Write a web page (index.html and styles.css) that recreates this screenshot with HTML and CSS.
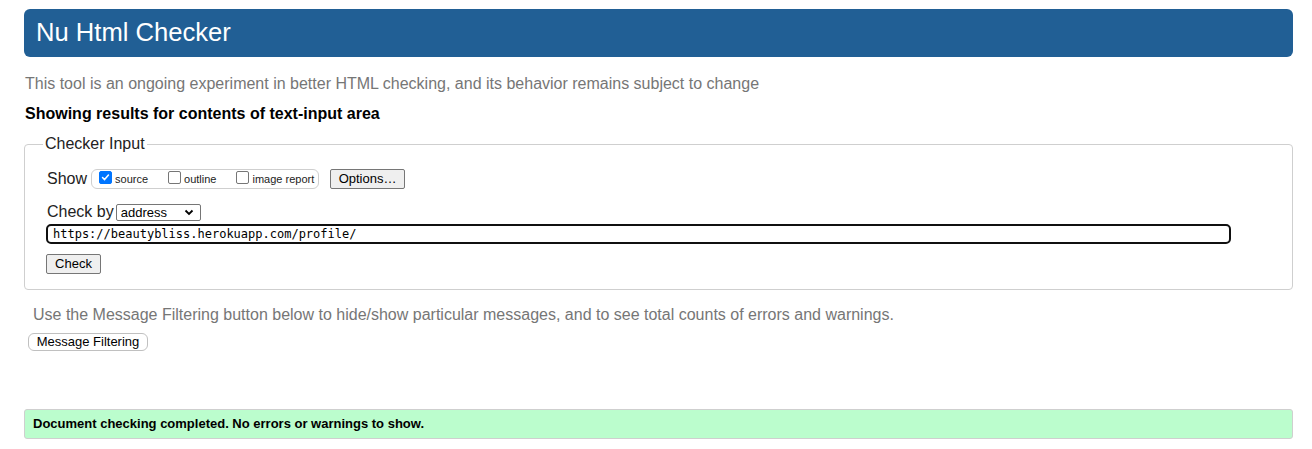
FILE: index.html
```html
<!DOCTYPE html>
<html>
<head>
<meta charset="utf-8">
<link rel="stylesheet" href="styles.css">
</head>
<body>
<div class="page">
  <h1 class="banner">Nu Html Checker</h1>
  <p class="intro">This tool is an ongoing experiment in better HTML checking, and its behavior remains subject to change</p>
  <p class="showing">Showing results for contents of text-input area</p>
  <fieldset class="checker">
    <legend class="legend">Checker Input</legend>
    <div class="row show-row">
      <span class="lbl">Show</span>
      <span class="cbgroup">
        <label class="cb cb-source"><span class="box checked"><svg width="13" height="13" viewBox="0 0 13 13"><path d="M3 6.6 L5.4 9 L10 3.6" fill="none" stroke="#fff" stroke-width="1.8" stroke-linecap="round" stroke-linejoin="round"/></svg></span>source</label>
        <label class="cb cb-outline"><span class="box"></span>outline</label>
        <label class="cb cb-image"><span class="box"></span>image report</label>
      </span>
      <button class="btn options">Options…</button>
    </div>
    <div class="row checkby-row">
      <span class="lbl">Check by</span>
      <span class="select">address<svg width="10" height="7" viewBox="0 0 10 7"><path d="M1.5 1.5 L5 5 L8.5 1.5" fill="none" stroke="#000" stroke-width="1.8"/></svg></span>
    </div>
    <div class="url">https://beautybliss.herokuapp.com/profile/</div>
    <button class="btn check">Check</button>
  </fieldset>
  <p class="filtering">Use the Message Filtering button below to hide/show particular messages, and to see total counts of errors and warnings.</p>
  <button class="btn msgfilter">Message Filtering</button>
  <div class="success">Document checking completed. No errors or warnings to show.</div>
</div>
</body>
</html>
```

FILE: styles.css
```css
* { box-sizing: border-box; }
html, body { margin: 0; padding: 0; background: #fff; }
body { font-family: "Liberation Sans", Arial, sans-serif; color: #000; }
.page { padding: 9px 19px 0 24px; }
.banner {
  margin: 0;
  height: 48px;
  background: #215f95;
  color: #fff;
  border-radius: 6px;
  font-weight: normal;
  font-size: 25.6px;
  line-height: 46px;
  padding-left: 12px;
}
.intro {
  margin: 17px 0 0 1px;
  color: #767676;
  font-size: 16px;
  line-height: 20px;
}
.showing {
  margin: 10px 0 0 1px;
  font-weight: bold;
  font-size: 16px;
  line-height: 20px;
}
.checker {
  margin: 11px 0 0 0;
  border: 1px solid #cfcfcf;
  border-radius: 4px;
  padding: 16px 62px 15px 22px;
  min-width: 0;
}
.legend {
  font-size: 16px;
  padding: 0 2px;
  margin-left: -4px;
  color: #222;
  line-height: 18px;
}
.row { display: flex; align-items: center; }
.lbl { font-size: 16px; color: #222; white-space: nowrap; }
.show-row { height: 20px; }
.cbgroup {
  display: inline-flex;
  align-items: center;
  height: 20px;
  margin-left: 4px;
  border: 1px solid #cfcfcf;
  border-radius: 6px;
  padding: 0 0 0 7px;
  width: 228px;
  flex: none;
}
.cb {
  display: inline-flex;
  align-items: center;
  font-size: 11px;
  color: #222;
  white-space: nowrap;
}
.cb-outline { margin-left: 20px; }
.cb-image { margin-left: 20px; }
.box {
  width: 13px;
  height: 13px;
  border: 1px solid #767676;
  border-radius: 2px;
  margin-right: 3px;
  margin-top: -3px;
  display: inline-flex;
  align-items: center;
  justify-content: center;
  background: #fff;
  flex: none;
}
.box.checked { background: #0075ff; border-color: #0075ff; }
.box svg { display: block; }
.btn {
  font-family: "Liberation Sans", Arial, sans-serif;
  font-size: 13px;
  color: #000;
  background: #efefef;
  border: 1px solid #767676;
  border-radius: 2px;
  padding: 0 6px;
  height: 20px;
  line-height: 18px;
  white-space: nowrap;
}
.options { margin-left: 11px; width: 75px; flex: none; }
.checkby-row { margin-top: 14px; height: 18px; }
.select {
  display: inline-flex;
  align-items: center;
  justify-content: space-between;
  margin-left: 2px;
  width: 85px;
  height: 17px;
  border: 1px solid #767676;
  border-radius: 2px;
  font-size: 13px;
  padding: 0 6px 0 4px;
  color: #000;
}
.url {
  margin: 3px 0 0 -1px;
  width: 1185px;
  height: 20px;
  border: 2px solid #101010;
  border-radius: 5px;
  font-family: "DejaVu Sans Mono", "Liberation Mono", monospace;
  font-size: 12px;
  line-height: 16px;
  padding-left: 5px;
  color: #000;
}
.check { margin: 10px 0 0 -1px; width: 55px; display: block; }
.filtering {
  margin: 15px 0 0 9px;
  color: #767676;
  font-size: 16px;
  line-height: 20px;
}
.msgfilter {
  margin: 8px 0 0 4px;
  height: 18px;
  line-height: 16px;
  width: 120px;
  background: #fff;
  border: 1px solid #c0c0c0;
  border-radius: 6px;
  padding: 0 6px;
}
.success {
  margin-top: 58px;
  height: 30px;
  background: #bbfdcd;
  border: 1px solid #cfcfcf;
  border-radius: 3px;
  font-weight: bold;
  font-size: 13px;
  line-height: 28px;
  padding-left: 8px;
}
```
